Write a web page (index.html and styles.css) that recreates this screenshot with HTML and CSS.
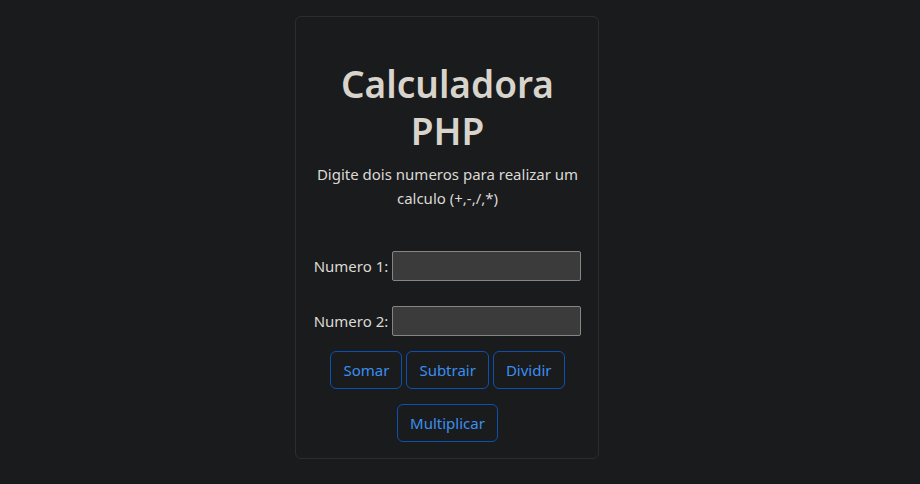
FILE: index.html
```html
<!DOCTYPE html>
<html lang="pt">
<head>
<meta charset="utf-8">
<title>Calculadora PHP</title>
<link rel="stylesheet" href="styles.css">
</head>
<body>
<main class="page">
  <section class="card">
    <h1 class="title">Calculadora PHP</h1>
    <p class="lead">Digite dois numeros para realizar um calculo (+,-,/,*)</p>
    <form class="form">
      <div class="field">
        <label class="label" for="n1">Numero 1:</label>
        <input class="input" id="n1" type="text">
      </div>
      <div class="field">
        <label class="label" for="n2">Numero 2:</label>
        <input class="input" id="n2" type="text">
      </div>
      <div class="buttons">
        <button class="btn" type="button">Somar</button>
        <button class="btn" type="button">Subtrair</button>
        <button class="btn" type="button">Dividir</button>
      </div>
      <div class="buttons">
        <button class="btn" type="button">Multiplicar</button>
      </div>
    </form>
  </section>
</main>
</body>
</html>
```
FILE: styles.css
```css
* { box-sizing: border-box; }
html, body { margin: 0; padding: 0; }
body {
  background: #1a1b1d;
  color: #dcd9d4;
  font-family: "Noto Sans", "Open Sans", sans-serif;
  font-size: 15px;
  width: 920px;
  height: 484px;
  overflow: hidden;
}
.page {
  display: flex;
  justify-content: center;
  padding: 16px 27px 0 0;
}
.card {
  width: 304px;
  border: 1px solid #2b2e30;
  border-radius: 6px;
  padding: 43px 11px 16px 13px;
  display: flex;
  flex-direction: column;
  align-items: center;
  text-align: center;
}
.title {
  margin: 0;
  font-size: 37px;
  font-weight: 600;
  line-height: 47px;
  color: #d8d4cc;
  width: 230px;
}
.lead {
  margin: 8px 0 0;
  line-height: 24px;
  width: 270px;
}
.form {
  margin-top: 41px;
  display: flex;
  flex-direction: column;
  align-items: center;
}
.field {
  display: flex;
  align-items: center;
  gap: 4px;
  margin-bottom: 25px;
}
.field:nth-child(2) { margin-bottom: 15px; }
.label { color: #dcd9d4; }
.input {
  width: 189px;
  height: 30px;
  background: #3b3b3b;
  border: 1px solid #858585;
  border-radius: 2px;
  color: #dcd9d4;
  padding: 0 4px;
  font: inherit;
}
.buttons {
  display: flex;
  gap: 4px;
  justify-content: center;
  margin-bottom: 15px;
}
.buttons:last-child { margin-bottom: 0; }
.btn {
  height: 38px;
  padding: 0 12px;
  background: transparent;
  border: 1px solid #0d50b0;
  border-radius: 6px;
  color: #3a8ff0;
  font: inherit;
}
```
